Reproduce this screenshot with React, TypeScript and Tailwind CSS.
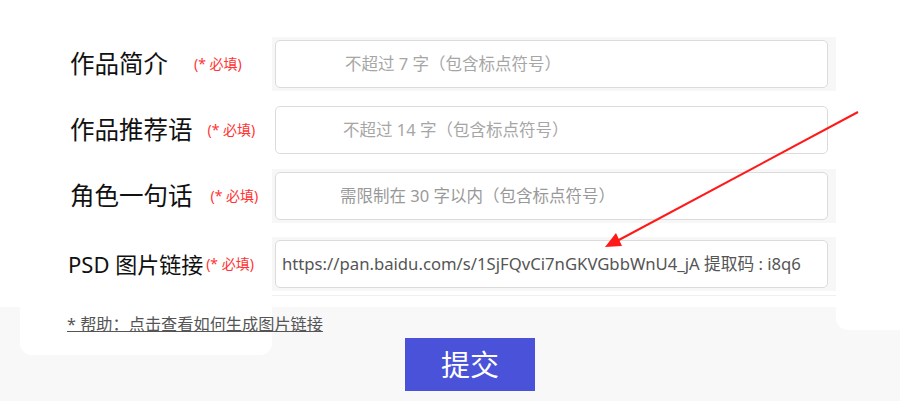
import React from 'react';

const font = "font-['Noto_Sans','Noto_Sans_CJK_SC',sans-serif]";

interface FieldRowProps {
  label: string;
  labelClass: string;
  tagClass: string;
  value: string;
  valueClass: string;
  shaded?: boolean;
}

const FieldRow: React.FC<FieldRowProps> = ({ label, labelClass, tagClass, value, valueClass, shaded }) => {
  return (
    <div className="flex items-center h-[54px]">
      <div className="w-[272px] flex items-center pl-[70px]">
        <span className={`text-[#111] leading-none ${labelClass}`}>{label}</span>
        <span className={`text-[14px] text-[#f33] leading-none ${tagClass}`}>(* 必填)</span>
      </div>
      <div className={`w-[564px] h-[54px] py-[3px] pl-[3px] pr-[8px] ${shaded ? 'bg-[#f7f7f7]' : ''}`}>
        <div className="h-full bg-white border border-[#dcdcdc] rounded-[5px] flex items-center">
          <span className={valueClass}>{value}</span>
        </div>
      </div>
    </div>
  );
};

export default function App() {
  return (
    <div className={`relative w-[900px] h-[401px] bg-[#f8f8f8] overflow-hidden ${font}`}>
      <div className="bg-white h-[307px] pt-[37px] flex flex-col">
        <FieldRow
          label="作品简介"
          labelClass="text-[24.5px]"
          tagClass="ml-[26px]"
          value="不超过 7 字（包含标点符号）"
          valueClass="pl-[69px] text-[16.5px] text-[#a6a6a6]"
          shaded
        />
        <div className="h-[12px]" />
        <FieldRow
          label="作品推荐语"
          labelClass="text-[24.5px]"
          tagClass="ml-[15px]"
          value="不超过 14 字（包含标点符号）"
          valueClass="pl-[67px] text-[16.5px] text-[#a6a6a6]"
        />
        <div className="h-[12px]" />
        <FieldRow
          label="角色一句话"
          labelClass="text-[24.5px]"
          tagClass="ml-[18px]"
          value="需限制在 30 字以内（包含标点符号）"
          valueClass="pl-[64px] text-[16.5px] text-[#999]"
          shaded
        />
        <div className="h-[14px]" />
        <FieldRow
          label="PSD 图片链接"
          labelClass="text-[22px] -ml-[2px]"
          tagClass="ml-[3px]"
          value="https://pan.baidu.com/s/1SjFQvCi7nGKVGbbWnU4_jA 提取码 : i8q6"
          valueClass="pl-[6px] text-[16.7px] text-[#555] whitespace-nowrap"
          shaded
        />
        <div className="ml-[272px] w-[564px] mt-[4px] border-t border-[#f0f0f0]" />
      </div>

      <div className="flex items-start">
        <div className="ml-[20px] w-[252px] h-[48px] bg-white rounded-b-[12px] pl-[47px] pt-[5px]">
          <a className="text-[16.2px] text-[#555] underline whitespace-nowrap">* 帮助：点击查看如何生成图片链接</a>
        </div>
        <div className="w-[564px] pl-[133px] pt-[31px]">
          <button className="w-[130px] h-[53px] bg-[#4a52d9] text-white text-[29px] leading-none">提交</button>
        </div>
        <div className="w-[64px] h-[23px] bg-white rounded-bl-[12px]" />
      </div>

      <svg className="absolute left-0 top-0 pointer-events-none" width="900" height="401">
        <line x1="858" y1="112" x2="617" y2="241" stroke="#ff1a1a" strokeWidth="2" />
        <polygon points="605,247 616,233 622,246" fill="#ff1a1a" />
      </svg>
    </div>
  );
}
